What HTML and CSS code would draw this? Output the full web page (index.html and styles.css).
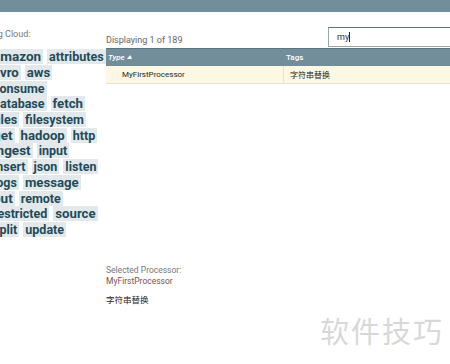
FILE: index.html
```html
<!DOCTYPE html>
<html lang="en">
<head>
  <meta charset="UTF-8" />
  <title>Add Processor</title>
  <link rel="stylesheet" href="styles.css">
</head>
<body>
  <div class="dialog-header"></div>

  <div class="dialog-body">
    <div class="tag-panel">
      <div class="tag-label">Tag Cloud:</div>
      <div class="tag-cloud">
        <div class="tag-row"><span class="tag big">amazon</span><span class="tag">attributes</span></div>
        <div class="tag-row"><span class="tag mid">avro</span><span class="tag mid">aws</span></div>
        <div class="tag-row"><span class="tag">consume</span></div>
        <div class="tag-row"><span class="tag">database</span><span class="tag mid">fetch</span></div>
        <div class="tag-row"><span class="tag">files</span><span class="tag">filesystem</span></div>
        <div class="tag-row"><span class="tag big">get</span><span class="tag mid">hadoop</span><span class="tag">http</span></div>
        <div class="tag-row"><span class="tag big">ingest</span><span class="tag">input</span></div>
        <div class="tag-row"><span class="tag">insert</span><span class="tag">json</span><span class="tag">listen</span></div>
        <div class="tag-row"><span class="tag">logs</span><span class="tag mid">message</span></div>
        <div class="tag-row"><span class="tag big">put</span><span class="tag">remote</span></div>
        <div class="tag-row"><span class="tag">restricted</span><span class="tag mid">source</span></div>
        <div class="tag-row"><span class="tag">split</span><span class="tag">update</span></div>
      </div>
    </div>

    <div class="table-panel">
      <div class="table-top">
        <div class="count">Displaying 1 of 189</div>
        <div class="search">my<span class="caret"></span></div>
      </div>
      <div class="grid">
        <div class="grid-head">
          <div class="col-type">Type <span class="sort">&#9650;</span></div>
          <div class="col-tags">Tags</div>
        </div>
        <div class="grid-row selected">
          <div class="col-type">MyFirstProcessor</div>
          <div class="col-tags">字符串替换</div>
        </div>
      </div>

      <div class="details">
        <div class="details-label">Selected Processor:</div>
        <div class="details-type">MyFirstProcessor</div>
        <div class="details-desc">字符串替换</div>
      </div>
    </div>
  </div>

  <div class="watermark">软件技巧</div>
</body>
</html>
```

FILE: styles.css
```css
body {
  margin: 0;
  background-color: #ffffff;
  font-family: Roboto, "Noto Sans CJK SC", sans-serif;
  color: #262626;
  overflow: hidden;
  width: 450px;
  height: 364px;
  position: relative;
}
.dialog-header {
  height: 12px;
  background-color: #728e9b;
}
.dialog-body {
  display: flex;
}
.tag-panel {
  width: 106px;
  margin-left: -14px;
  padding-top: 17px;
  flex-shrink: 0;
}
.tag-label {
  font-size: 9px;
  color: #777777;
  padding-left: 2px;
  height: 20px;
}
.tag-row {
  display: flex;
  gap: 4px;
  height: 15.7px;
  align-items: center;
  margin-left: 5px;
}
.tag {
  font-size: 12.5px;
  font-weight: 700;
  color: #1f4b59;
  background-color: #e3e8eb;
  padding: 0 2px;
  line-height: 15px;
  white-space: nowrap;
}
.tag.mid {
  font-size: 13.2px;
}
.tag.big {
  font-size: 13.5px;
}
.table-panel {
  flex: 1;
  padding-top: 14px;
  margin-left: 14px;
}
.table-top {
  display: flex;
  justify-content: space-between;
  align-items: flex-end;
  height: 21px;
}
.count {
  font-size: 9px;
  color: #666666;
  padding-bottom: 2px;
}
.search {
  width: 130px;
  height: 20px;
  box-sizing: border-box;
  border: 1px solid #9aa7ad;
  border-top-color: #5f7780;
  border-right: none;
  font-size: 9px;
  color: #333333;
  padding: 4px 0 0 8px;
  margin-right: -8px;
}
.caret {
  display: inline-block;
  width: 1px;
  height: 10px;
  background-color: #222222;
  vertical-align: -2px;
}
.grid-head,
.grid-row {
  display: flex;
  font-size: 8px;
}
.grid-head {
  height: 17px;
  margin-top: 1px;
  align-items: center;
  background-color: #728e9b;
  border-top: 1px solid #5b747f;
  color: #ffffff;
  font-weight: 500;
  font-style: italic;
}
.grid-head .col-tags {
  font-style: normal;
}
.sort {
  font-size: 5px;
  vertical-align: 1px;
}
.grid-row {
  height: 17px;
  align-items: center;
  border-bottom: 1px solid #e6e2d6;
}
.grid-row.selected {
  background-color: #fdf8e3;
}
.col-type {
  width: 177px;
  padding-left: 2px;
  box-sizing: border-box;
}
.grid-row .col-type {
  padding-left: 16px;
}
.col-tags {
  padding-left: 3px;
  align-self: stretch;
  display: flex;
  align-items: center;
}
.grid-row .col-tags {
  border-left: 1px solid #e6e2d6;
  padding-left: 6px;
}
.details {
  margin-top: 181px;
}
.details-label {
  font-size: 8.5px;
  color: #777777;
}
.details-type {
  font-size: 8.5px;
  color: #775351;
  margin-top: 1px;
}
.details-desc {
  font-size: 8.5px;
  color: #262626;
  margin-top: 7px;
}
.watermark {
  position: absolute;
  left: 320px;
  top: 309px;
  font-family: "Noto Sans CJK SC", sans-serif;
  font-size: 29px;
  color: #d8d8d8;
  letter-spacing: 2px;
}
```
